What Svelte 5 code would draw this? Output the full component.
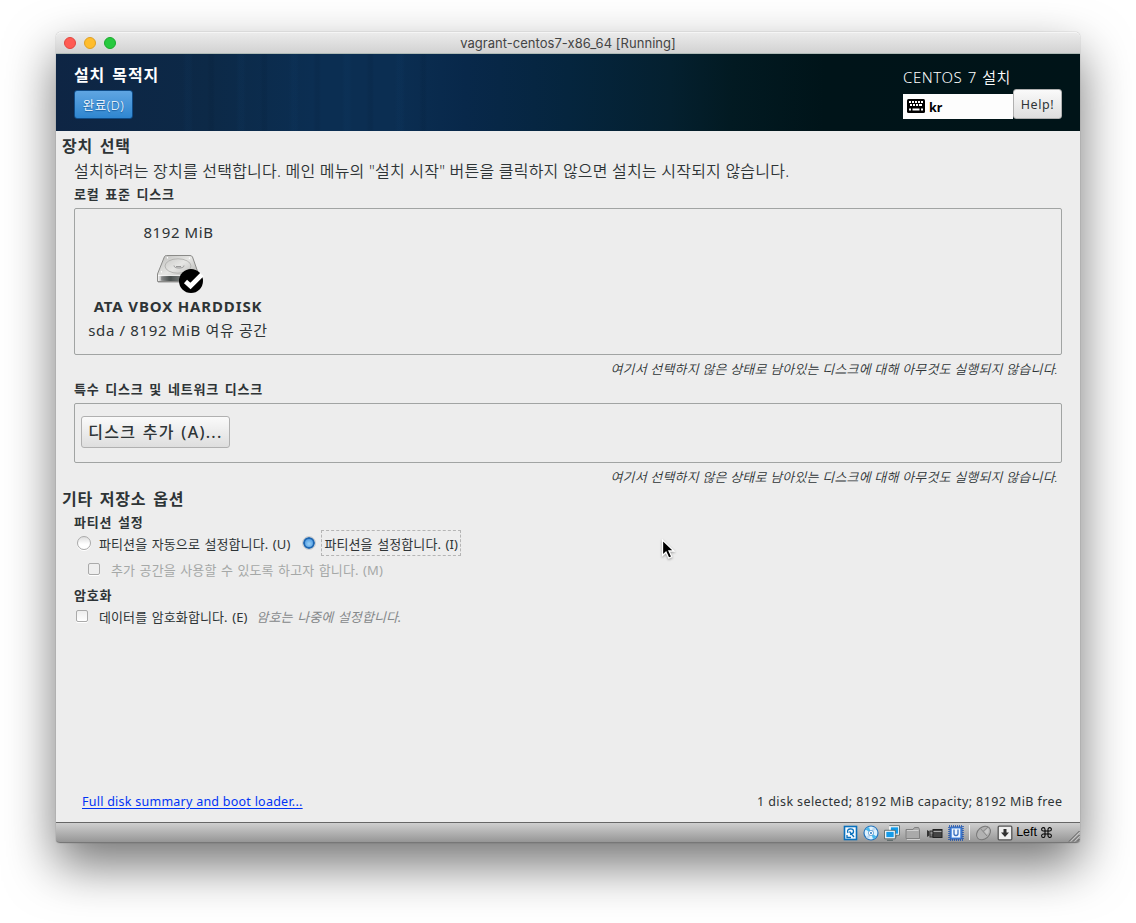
<script>
  const warning = '여기서 선택하지 않은 상태로 남아있는 디스크에 대해 아무것도 실행되지 않습니다.';
  let mode = $state('manual');
</script>

<div class="desktop">
  <div class="window">
    <div class="titlebar">
      <div class="lights"><i class="close"></i><i class="min"></i><i class="max"></i></div>
      <span class="title">vagrant-centos7-x86_64 [Running]</span>
    </div>

    <header class="banner">
      <div class="left">
        <h1>설치 목적지</h1>
        <button class="done">완료(D)</button>
      </div>
      <div class="right">
        <div class="product">CENTOS 7 설치</div>
        <div class="tools">
          <div class="layout">
            <svg width="18" height="14" viewBox="0 0 18 14">
              <rect width="18" height="14" rx="1.5" fill="#000" />
              <path d="M2 3h2M5 3h2M8 3h2M11 3h2M14 3h2M3 6h2M6 6h2M9 6h2M12 6h3M2 10.500h2M5.500 10.500h7M14 10.500h2" stroke="#fff" stroke-width="2" />
            </svg>
            <b>kr</b>
          </div>
          <button class="help">Help!</button>
        </div>
      </div>
    </header>

    <main>
      <h2>장치 선택</h2>
      <p class="desc">설치하려는 장치를 선택합니다. 메인 메뉴의 "설치 시작" 버튼을 클릭하지 않으면 설치는 시작되지 않습니다.</p>
      <h3 class="local">로컬 표준 디스크</h3>
      <section class="frame disks">
        <div class="disk">
          <span class="size">8192 MiB</span>
          <svg class="drive" width="50" height="42" viewBox="0 0 50 42">
            <defs>
              <linearGradient id="top" x1="0" y1="0" x2="1" y2="1">
                <stop offset="0" stop-color="#bcbcba" /><stop offset=".45" stop-color="#e6e6e4" /><stop offset="1" stop-color="#a4a4a2" />
              </linearGradient>
              <linearGradient id="front" x1="0" y1="0" x2="1" y2="0">
                <stop offset="0" stop-color="#f4f4f4" /><stop offset=".12" stop-color="#999" /><stop offset=".3" stop-color="#4b5150" /><stop offset="1" stop-color="#b5b5b5" />
              </linearGradient>
            </defs>
            <path d="M4 30h36" stroke="#000" stroke-opacity=".18" stroke-width="2" />
            <path d="M10.500 4.500Q11 3.500 12.500 3.500H36Q37.800 3.500 38.500 5L44.500 22V29.500H3.500V22Z" fill="url(#top)" stroke="#8a8a88" />
            <path d="M4 23.500H44V29H4Z" fill="url(#front)" />
            <path d="M4 23.500H44" stroke="#fff" stroke-opacity=".8" />
            <path d="M8 24.500v4M10 24.500v4M12 24.500v4M14 24.500v4M17 24.500v4" stroke="#4b5150" stroke-opacity=".7" />
            <ellipse cx="24" cy="14" rx="13" ry="7.200" fill="none" stroke="#b0b0ae" stroke-width=".9" />
            <path d="M20 13.500Q20 16 25 16T30 13.500M22 14.500h5" fill="none" stroke="#999" />
            <path d="M13 6l1-.5M35 6l1 .5M7 20l1-.5" stroke="#fff" stroke-width="1.500" />
            <circle cx="37" cy="29" r="12" fill="#000" />
            <path d="M31.500 29.500L36.500 34L48 22.500" fill="none" stroke="#fff" stroke-width="4.600" />
          </svg>
          <strong>ATA VBOX HARDDISK</strong>
          <span class="detail">sda / 8192 MiB 여유 공간</span>
        </div>
      </section>
      <p class="warning">{warning}</p>

      <h3 class="special">특수 디스크 및 네트워크 디스크</h3>
      <section class="frame network">
        <button class="add">디스크 추가 (A)...</button>
      </section>
      <p class="warning">{warning}</p>

      <h2 class="other">기타 저장소 옵션</h2>
      <h3 class="part">파티션 설정</h3>
      <div class="radios">
        <button class="opt auto" onclick={() => (mode = 'auto')}>
          <i class="radio" class:on={mode === 'auto'}></i><span>파티션을 자동으로 설정합니다. (U)</span>
        </button>
        <button class="opt manual" onclick={() => (mode = 'manual')}>
          <i class="radio" class:on={mode === 'manual'}></i><span class="focus">파티션을 설정합니다. (I)</span>
        </button>
      </div>
      <div class="opt extra"><i class="box"></i><span>추가 공간을 사용할 수 있도록 하고자 합니다. (M)</span></div>
      <h3 class="crypt">암호화</h3>
      <div class="opt encrypt"><i class="box"></i><span>데이터를 암호화합니다. (E)</span><em>암호는 나중에 설정합니다.</em></div>

      <footer>
        <a href="#summary">Full disk summary and boot loader...</a>
        <span>1 disk selected; 8192 MiB capacity; 8192 MiB free</span>
      </footer>

      <svg class="cursor" width="16" height="22" viewBox="0 0 16 22">
        <path d="M1.500 1V16.500L5 13.200L7.800 19.200L10.800 17.800L8 12H13Z" fill="#000" stroke="#fff" stroke-width="1.300" />
      </svg>
    </main>

    <div class="status">
      <svg width="15" height="16" viewBox="0 0 15 16">
        <rect x="1.500" y="1.500" width="12" height="13" fill="#f4faff" stroke="#0870bd" stroke-width="1.600" />
        <path d="M5 8Q3.500 4.500 7 4Q10.500 3.500 10.500 6.500Q10.500 9 7 9.500M6.500 6.500L11 12M4 10V12.500H8" fill="none" stroke="#0870bd" stroke-width="1.300" />
      </svg>
      <svg width="16" height="16" viewBox="0 0 16 16">
        <circle cx="8" cy="8" r="7" fill="#dff3ff" stroke="#2474bd" stroke-width="1.200" />
        <path d="M8 8L2.500 4.500Q4 2.500 6 2ZM8 8L13.500 11.500Q12 13.500 10 14Z" fill="#48b9ed" />
        <path d="M8 8L10 2Q12 2.500 13 4ZM8 8L6 14Q4 13.500 3 12Z" fill="#bdd8ef" />
        <circle cx="8" cy="8" r="2.600" fill="#fff" stroke="#2474bd" stroke-width=".6" /><circle cx="8" cy="8" r="1" fill="#2474bd" />
      </svg>
      <svg width="16" height="16" viewBox="0 0 16 16">
        <rect x="6" y="1.500" width="9" height="8" fill="#159be8" stroke="#fff" stroke-width="1.600" />
        <path d="M5.300.7H15.500V10.200H12V12.500" fill="none" stroke="#455" stroke-width=".8" />
        <rect x="1.500" y="6" width="9" height="7" fill="#159be8" stroke="#fff" stroke-width="1.600" />
        <path d="M.6 5.300H11.300V13.800H.6ZM3 15.300H9" fill="none" stroke="#455" stroke-width=".8" />
      </svg>
      <svg width="16" height="16" viewBox="0 0 16 16">
        <path d="M1 13.500V4.500H8L9.500 2.500H13.500L14.500 4.500V13.500Z" fill="#aaa" stroke="#808080" />
        <path d="M2 5.500H13.500M2 14.500H15" stroke="#d0d0d0" />
      </svg>
      <svg width="17" height="16" viewBox="0 0 17 16">
        <path d="M1 5L3.500 6.500V10.500L1 12Z" fill="#333" />
        <rect x="4" y="6" width="3" height="6" fill="#777" stroke="#333" />
        <rect x="7" y="4.500" width="9" height="8" fill="#444" stroke="#222" />
        <path d="M7.500 6.500H15.500M4.500 8H6.500" stroke="#aaa" />
      </svg>
      <svg width="16" height="16" viewBox="0 0 16 16">
        <rect x="1" y="1" width="14" height="14" fill="none" stroke="#174fae" stroke-width="1.400" stroke-dasharray="1 1" />
        <rect x="2" y="2" width="12" height="12" rx="1" fill="#4c8ade" stroke="#1d51aa" stroke-width=".8" />
        <rect x="3.800" y="3.500" width="8.400" height="9" fill="#eef6ff" />
        <path d="M6 4.500V8.500Q6 10.500 8 10.500T10 8.500V4.500" fill="none" stroke="#3970bf" stroke-width="1.300" />
      </svg>
      <i class="sep"></i>
      <svg width="17" height="16" viewBox="0 0 17 16">
        <ellipse cx="8.500" cy="8" rx="7.800" ry="5.800" transform="rotate(-42 8.500 8)" fill="#b2b2b2" stroke="#777" />
        <path d="M5 3L12 11M8 6.500L13 2" fill="none" stroke="#888" />
        <path d="M9.500 6.500L13 3.200Q14.500 5 13 8.500L11.500 9Z" fill="#c8c8c8" />
      </svg>
      <svg width="16" height="16" viewBox="0 0 16 16">
        <rect x="1.200" y="1.200" width="13.600" height="13.600" rx="1" fill="#eee" stroke="#555" stroke-width="1.300" />
        <path d="M6.500 4H9.500V7.500H12L8 12L4 7.500H6.500Z" fill="#303030" />
      </svg>
      <span class="host">Left
        <svg width="11" height="11" viewBox="0 0 11 11"><path d="M4 4V2.300A1.700 1.700 0 1 0 2.300 4H8.700A1.700 1.700 0 1 0 7 2.300V8.700A1.700 1.700 0 1 0 8.700 7H2.300A1.700 1.700 0 1 0 4 8.700Z" fill="none" stroke="#000" stroke-width="1.050" /></svg>
      </span>
      <svg class="grip" width="12" height="12" viewBox="0 0 12 12">
        <path d="M1 11.500L11.500 1M5 11.500L11.500 5M9 11.500L11.500 9" stroke="#555" />
        <path d="M2.300 11.500L11.500 2.300M6.300 11.500L11.500 6.300" stroke="#ddd" stroke-width=".7" />
      </svg>
    </div>
  </div>
</div>

<style>
  :global(body) { margin: 0; background: #fff; }
  .desktop {
    width: 1136px; height: 923px; box-sizing: border-box; padding: 32px 56px; overflow: hidden;
    font-family: "Noto Sans", "Noto Sans CJK KR", sans-serif; font-size: 13px; color: #2e3436;
  }
  .window {
    width: 1024px; height: 811px; display: flex; flex-direction: column; border-radius: 5px 5px 4px 4px;
    box-shadow: 0 0 1px rgba(0, 0, 0, .5), 0 22px 50px rgba(0, 0, 0, .55);
  }
  h1, h2, h3, p { margin: 0; white-space: nowrap; }
  button { font: inherit; color: inherit; padding: 0; margin: 0; box-sizing: border-box; white-space: nowrap; }
  svg { display: block; flex: none; }

  .titlebar {
    height: 22px; box-sizing: border-box; flex: none; display: grid; grid-template-columns: 120px 1fr 120px; align-items: center;
    background: linear-gradient(#ebebeb, #d2d2d2); border-top: 1px solid #f5f5f5; border-bottom: 1px solid #aebab6;
    border-radius: 5px 5px 0 0;
  }
  .lights { display: flex; gap: 8px; padding: 0 0 0 8px; }
  .lights i { width: 12px; height: 12px; border-radius: 50%; box-sizing: border-box; }
  .close { background: #ff5b53; border: 1px solid #e2463f; }
  .min { background: #ffbd2d; border: 1px solid #dfa023; }
  .max { background: #27c93f; border: 1px solid #1aab2c; }
  .title { text-align: center; font: 13px/20px Inter, sans-serif; color: #444; letter-spacing: .03px; }

  .banner {
    height: 77px; flex: none; box-sizing: border-box; display: flex; justify-content: space-between; padding: 0 18px;
    background:
      repeating-linear-gradient(90deg, transparent 0 17px, rgba(25, 90, 150, .05) 20px 24px, transparent 27px 41px, rgba(0, 15, 35, .08) 44px 47px, transparent 49px 53px) 110px 0 / 270px 100% no-repeat,
      linear-gradient(91deg, #0e2544 0, #0c2947 15%, #0b2e52 25%, #0b2e52 33%, #08284a 40%, #05253e 50%, #04202f 60%, #021a22 66%, #001419 75%, #001418 100%);
  }
  .left { padding-top: 10px; color: #fff; }
  h1 { font-size: 16px; line-height: 22px; letter-spacing: .9px; word-spacing: 2px; font-weight: 700; }
  .done {
    display: block; width: 59px; height: 29px; margin-top: 4px; border: 1px solid #0f4b86; border-radius: 3px; color: #fff;
    background: linear-gradient(#5fa5e2, #2f86d0); font-size: 12.500px; line-height: 29px; letter-spacing: .5px; font-weight: 350; text-shadow: 0 1px 1px #155a9c;
  }
  .right { width: 159px; color: #fff; }
  .product { font-size: 15px; line-height: 22px; padding-top: 12px; height: 23px; letter-spacing: .55px; word-spacing: 1px; font-weight: 350; white-space: nowrap; }
  .tools { display: flex; align-items: flex-end; }
  .layout { width: 110px; height: 25px; background: #fdfdfd; color: #000; display: flex; align-items: center; gap: 4px; padding-left: 4px; box-sizing: border-box; }
  .layout svg { margin-bottom: 1px; }
  .layout b { font-size: 12.500px; line-height: 20px; padding-top: 2px; }
  .help, .add { border: 1px solid #b0b0b0; border-radius: 3px; background: linear-gradient(#fafafa, #dedede); color: #2e3436; }
  .help { width: 49px; height: 30px; font-size: 12.500px; line-height: 29px; letter-spacing: .6px; }

  main { position: relative; flex: 1; min-height: 0; background: #ededed; display: flex; flex-direction: column; box-sizing: border-box; padding: 4px 18px 0; }
  h2 { margin-left: -12px; font-size: 16px; line-height: 22px; height: 22px; letter-spacing: .75px; word-spacing: 2px; }
  .desc { font-size: 16px; line-height: 24px; margin-top: 2px; letter-spacing: .22px; font-weight: 350; }
  h3 { font-size: 13px; line-height: 20px; height: 20px; letter-spacing: .8px; word-spacing: 1.600px; }
  .local { margin-top: 1px; }
  .frame { border: 1px solid #a1a4a3; border-radius: 2px; box-sizing: border-box; flex: none; }
  .disks { height: 147px; margin-top: 4px; padding: 11px 0 0 6px; }
  .disk { width: 194px; display: flex; flex-direction: column; align-items: center; white-space: nowrap; font-size: 15px; line-height: 24px; }
  .drive { margin: 8px 0 0 2px; }
  .size { letter-spacing: .6px; padding-left: 1px; }
  .disk strong { letter-spacing: .85px; }
  .detail { letter-spacing: .65px; font-weight: 375; }
  .warning { font-size: 13px; line-height: 22px; height: 20px; font-style: italic; text-align: right; padding-right: 4px; letter-spacing: .17px; margin-top: 3px; font-weight: 350; }
  .special { margin-top: 1px; }
  .network { height: 60px; margin-top: 4px; padding: 12px 6px; }
  .add { display: block; width: 149px; height: 32px; font-size: 16px; font-weight: 500; line-height: 28px; letter-spacing: 1.300px; word-spacing: 1px; }
  .other { margin-top: 2px; }
  .part { margin-top: 2px; }
  .radios { display: flex; height: 26px; margin-top: -2px; margin-bottom: 1px; }
  .opt { display: flex; align-items: center; border: 0; background: none; white-space: nowrap; line-height: 20px; font-size: 13px; letter-spacing: .1px; word-spacing: 1px; font-weight: 370; }
  .auto { padding-left: 3px; }
  .auto span { margin-left: 8px; padding-top: 2px; }
  .manual { margin-left: 12px; }
  .focus { border: 1px dashed #b5b5b5; padding: 3px 2px 1px; height: 20px; margin-left: 5px; }
  .radio { width: 14px; height: 14px; border-radius: 50%; box-sizing: border-box; border: 1px solid #aaa; background: linear-gradient(#dedede, #fff 60%); box-shadow: 0 1px #fff; }
  .radio.on { border: 2px solid #1e66b0; outline: 1px solid #ccc; width: 12px; height: 12px; margin: 0 1px; background: radial-gradient(circle at 50% 60%, #9bd0f5, #3c8fdf); box-shadow: none; }
  .box { width: 12px; height: 12px; box-sizing: border-box; border: 1px solid #aaa; border-radius: 2px; background: linear-gradient(#eee, #fff); box-shadow: 0 1px #fff; margin-bottom: 2px; }
  .extra { height: 26px; padding-left: 14px; color: #a5a8a7; }
  .extra .box { background: #eee; }
  .extra span, .encrypt span { margin-left: 11px; }
  .encrypt { height: 24px; padding-left: 2px; }
  .encrypt em { color: #85888a; margin-left: 9px; }
  .crypt { margin-top: 2px; }
  footer { margin: auto 0 9px; padding-left: 8px; display: flex; justify-content: space-between; line-height: 22px; font-size: 12.500px; }
  footer a { color: #0033f5; text-underline-offset: 2px; letter-spacing: .25px; }
  footer span { letter-spacing: .4px; margin-right: -.4px; }
  .cursor { position: absolute; left: 605px; top: 408px; filter: drop-shadow(0 1px 1px rgba(0, 0, 0, .35)); }

  .status {
    height: 21px; flex: none; box-sizing: border-box; border-top: 1px solid #666; border-bottom: 1px solid #777; border-radius: 0 0 4px 4px;
    background: linear-gradient(#cfcfcf, #969696); display: flex; justify-content: flex-end; align-items: center; gap: 5px;
  }
  .sep { width: 1px; height: 15px; background: #eee; }
  .host { font: 12.500px/16px "Liberation Sans", sans-serif; color: #000; display: flex; align-items: center; gap: 4px; margin-left: -2px; padding-bottom: 1px; }
  .grip { align-self: flex-end; margin-left: 11px; }
</style>
